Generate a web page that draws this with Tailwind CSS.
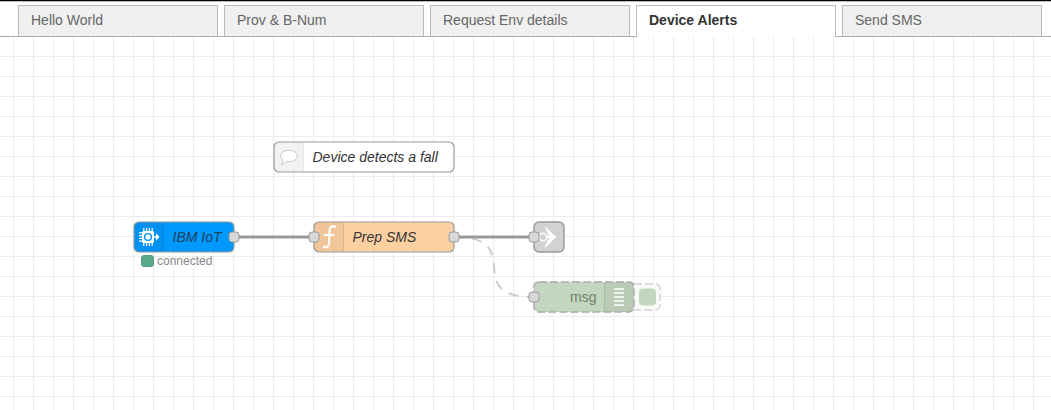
<!DOCTYPE html>
<html lang="en">
<head>
<meta charset="utf-8">
<title>Flow editor</title>
<script src="https://cdn.jsdelivr.net/npm/@tailwindcss/browser@4"></script>
</head>
<body class="bg-white w-[1051px] h-[410px] overflow-hidden flex flex-col font-['Liberation_Sans',Arial,sans-serif]">
<nav class="h-[37px] shrink-0 border-t border-black text-[14px] leading-[20px] text-[#666]">
  <div class="h-full border-t border-[#bbb] pt-[3px] flex">
    <div class="w-[18px] border-b border-[#aaa]"></div>
    <div class="w-[200px] border border-[#bbb] border-b-[#aaa] bg-[#f0f0f0] pl-3 pt-[4px]">Hello World</div>
    <div class="w-[6px] border-b border-[#aaa]"></div>
    <div class="w-[200px] border border-[#bbb] border-b-[#aaa] bg-[#f0f0f0] pl-3 pt-[4px]">Prov &amp; B-Num</div>
    <div class="w-[6px] border-b border-[#aaa]"></div>
    <div class="w-[200px] border border-[#bbb] border-b-[#aaa] bg-[#f0f0f0] pl-3 pt-[4px]">Request Env details</div>
    <div class="w-[6px] border-b border-[#aaa]"></div>
    <div class="w-[200px] border border-b-0 border-[#bbb] bg-white pl-3 pt-[4px] font-bold text-[#333]">Device Alerts</div>
    <div class="w-[6px] border-b border-[#aaa]"></div>
    <div class="w-[200px] border border-[#bbb] border-b-[#aaa] bg-[#f0f0f0] pl-3 pt-[4px]">Send SMS</div>
    <div class="grow border-b border-[#aaa]"></div>
  </div>
</nav>
<svg class="block w-[1051px] h-[373px]" viewBox="0 37 1051 373" fill="none">
  <defs>
    <pattern id="grid" x="13" y="36" width="20" height="20" patternUnits="userSpaceOnUse">
      <path d="M0 .5H20M.5 0V20" stroke="#ececec" stroke-width="1"/>
    </pattern>
  </defs>
  <rect x="0" y="37" width="1051" height="373" fill="url(#grid)"/>

  <!-- wires -->
  <g stroke="#999" stroke-width="3">
    <path d="M454 237C529 237 459 297 534 297" stroke="#ccc" stroke-width="2" stroke-dasharray="10 8"/>
    <path d="M234 237H314M454 237H534"/>
  </g>

  <!-- comment -->
  <rect x="274" y="142" width="180" height="30" rx="5" fill="#fff"/>
  <path d="M304 142H279a5 5 0 0 0-5 5V167a5 5 0 0 0 5 5H304z" fill="#f2f2f2"/>
  <path d="M303.500 142V172" stroke="#e6e6e6"/>
  <path d="M289 150.300c4.700 0 8.300 2.500 8.300 5.700s-3.600 5.700-8.300 5.700c-.8 0-1.500-.1-2.200-.2-1.400 1.700-3.300 2.800-5.600 3 1.100-1 1.800-2.500 1.900-4.100-1.500-1.100-2.400-2.700-2.400-4.400 0-3.200 3.600-5.700 8.300-5.700z" fill="#fff" stroke="#c8c8c8"/>
  <rect x="274" y="142" width="180" height="30" rx="5" stroke="#999" stroke-width="1.200"/>

  <!-- IBM IoT -->
  <rect x="134" y="222" width="100" height="30" rx="5" fill="#0099ff"/>
  <path d="M164 222H139a5 5 0 0 0-5 5V247a5 5 0 0 0 5 5H164z" fill="#000" fill-opacity=".05"/>
  <path d="M163.500 222V252" stroke="#000" stroke-opacity=".07"/>
  <g stroke="#fff">
    <path d="M143.800 228V231M146.600 228V231M149.400 228V231M152.200 228V231M143.800 243V246M146.600 243V246M149.400 243V246M152.200 243V246M139 232.800H142M139 235.600H142M139 238.400H142M139 241.200H142" stroke-width="1.200"/>
    <rect x="142.500" y="231.500" width="11" height="11" rx=".5" fill="#fff"/>
    <circle cx="148" cy="237" r="3.400" stroke="#0091f2" stroke-width="1.400"/>
    <path d="M153 237H157" stroke-width="1.600"/>
    <path d="M156 233.300L159.500 237L156 240.700z" stroke="none" fill="#fff"/>
  </g>
  <rect x="134" y="222" width="100" height="30" rx="5" stroke="#999" stroke-width="1.200"/>
  <rect x="141.500" y="255.500" width="12" height="11" rx="2.500" fill="#5aa98a" stroke="#53a07f"/>

  <!-- Prep SMS -->
  <rect x="314" y="222" width="140" height="30" rx="5" fill="#fdd0a2"/>
  <path d="M344 222H319a5 5 0 0 0-5 5V247a5 5 0 0 0 5 5H344z" fill="#000" fill-opacity=".05"/>
  <path d="M343.500 222V252" stroke="#000" stroke-opacity=".08"/>
  <path d="M335.800 227.300C332.500 225 329.800 226.500 329.600 230.500L329 243C328.800 247.500 326.300 248.300 323 246.300M323.800 235H334.500" stroke="#fff" stroke-width="2.200"/>
  <rect x="314" y="222" width="140" height="30" rx="5" stroke="#999" stroke-width="1.200"/>

  <!-- link out -->
  <rect x="534" y="222" width="30" height="30" rx="5" fill="#d2d2d2"/>
  <path d="M544.500 225.500L556 237L544.500 248.500L547.500 240.500V233.500z" fill="#fff"/>
  <circle cx="543.500" cy="237" r="5.500" fill="#d2d2d2"/>
  <path d="M546 237H556" stroke="#fff" stroke-width="2"/>
  <circle cx="543" cy="237" r="3.700" fill="#d2d2d2" stroke="#fff" stroke-width="1.500"/>
  <rect x="534" y="222" width="30" height="30" rx="5" stroke="#999" stroke-width="1.400"/>

  <!-- disabled debug -->
  <rect x="629" y="284" width="31" height="26" rx="5" fill="#fafafa" stroke="#d2d2d2" stroke-dasharray="8 3" stroke-width="1.500"/>
  <rect x="639" y="288.500" width="17" height="17" rx="4" fill="#c3d7bf"/>
  <rect x="534" y="282" width="100" height="30" rx="5" fill="#c3d6bf"/>
  <path d="M604 282H629a5 5 0 0 1 5 5V307a5 5 0 0 1-5 5H604z" fill="#000" fill-opacity=".05"/>
  <path d="M604.500 282V312" stroke="#000" stroke-opacity=".07"/>
  <path d="M614 289H624M614 293H624M614 297H624M614 301H624M614 305H624" stroke="#fff" stroke-width="1.600"/>
  <rect x="534" y="282" width="100" height="30" rx="5" stroke="#aaa" stroke-width="1.400" stroke-dasharray="8 3"/>

  <!-- ports -->
  <g fill="#d9d9d9" stroke="#999">
    <rect x="229" y="232" width="10" height="10" rx="3"/>
    <rect x="309" y="232" width="10" height="10" rx="3"/>
    <rect x="449" y="232" width="10" height="10" rx="3"/>
    <rect x="529" y="232" width="10" height="10" rx="3"/>
    <rect x="529" y="292" width="10" height="10" rx="3"/>
  </g>

  <g font-size="14" fill="#333" font-style="italic">
    <text x="312.500" y="162">Device detects a fall</text>
    <text x="172.500" y="242" fill="#1f3e57">IBM IoT</text>
    <text x="352.500" y="242">Prep SMS</text>
    <text x="570" y="302" font-style="normal" fill="#76806f">msg</text>
    <text x="157" y="265" font-size="12" font-style="normal" fill="#888">connected</text>
  </g>
</svg>
</body>
</html>
